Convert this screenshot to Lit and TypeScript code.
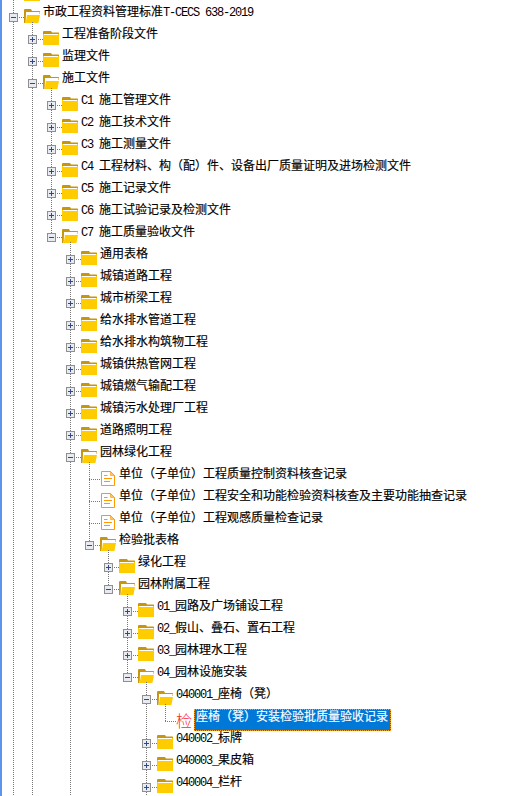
import { LitElement, html, css, svg } from "lit";
import { customElement } from "lit/decorators.js";

type Kind = "closed" | "open" | "doc" | "mark";
interface Row { d: number; k: Kind; t: string; sel?: boolean; }

const r = (d: number, k: Kind, t = ""): Row => ({ d, k, t });

const ROWS: Row[] = [
  r(0, "closed"),
  r(0, "open", "市政工程资料管理标准T-CECS 638-2019"),
  r(1, "closed", "工程准备阶段文件"),
  r(1, "closed", "监理文件"),
  r(1, "open", "施工文件"),
  r(2, "closed", "C1 施工管理文件"),
  r(2, "closed", "C2 施工技术文件"),
  r(2, "closed", "C3 施工测量文件"),
  r(2, "closed", "C4 工程材料、构（配）件、设备出厂质量证明及进场检测文件"),
  r(2, "closed", "C5 施工记录文件"),
  r(2, "closed", "C6 施工试验记录及检测文件"),
  r(2, "open", "C7 施工质量验收文件"),
  r(3, "closed", "通用表格"),
  r(3, "closed", "城镇道路工程"),
  r(3, "closed", "城市桥梁工程"),
  r(3, "closed", "给水排水管道工程"),
  r(3, "closed", "给水排水构筑物工程"),
  r(3, "closed", "城镇供热管网工程"),
  r(3, "closed", "城镇燃气输配工程"),
  r(3, "closed", "城镇污水处理厂工程"),
  r(3, "closed", "道路照明工程"),
  r(3, "open", "园林绿化工程"),
  r(4, "doc", "单位（子单位）工程质量控制资料核查记录"),
  r(4, "doc", "单位（子单位）工程安全和功能检验资料核查及主要功能抽查记录"),
  r(4, "doc", "单位（子单位）工程观感质量检查记录"),
  r(4, "open", "检验批表格"),
  r(5, "closed", "绿化工程"),
  r(5, "open", "园林附属工程"),
  r(6, "closed", "01_园路及广场铺设工程"),
  r(6, "closed", "02_假山、叠石、置石工程"),
  r(6, "closed", "03_园林理水工程"),
  r(6, "open", "04_园林设施安装"),
  r(7, "open", "040001_座椅（凳）"),
  { d: 8, k: "mark", t: "座椅（凳）安装检验批质量验收记录", sel: true },
  r(7, "closed", "040002_标牌"),
  r(7, "closed", "040003_果皮箱"),
  r(7, "closed", "040004_栏杆"),
  r(7, "closed"),
  r(3, "closed"),
  r(1, "closed"),
  r(0, "closed"),
];

function continues(i: number, level: number): boolean {
  for (let j = i + 1; j < ROWS.length; j++) {
    if (ROWS[j].d < level) return false;
    if (ROWS[j].d === level) return true;
  }
  return false;
}

const closedFolder = html`<svg class="icon" width="16" height="14" viewBox="0 0 16 14">
  <path d="M0 2V.5L1 0h7l1 1.5h6.5l.5.5v1H0z" fill="#c8960c"/>
  <rect x="0" y="3" width="16" height="11" fill="#ffcc00"/>
  <rect x="1" y="3" width="14" height="1" fill="#ffffff"/>
  <rect x="0" y="2" width="16" height="1" fill="#c8960c"/>
</svg>`;

const openFolder = html`<svg class="icon" width="16" height="14" viewBox="0 0 16 14">
  <path d="M0 14V.5L1 0h6l1 2h7.5l.5.5V5H2L1.6 14z" fill="#c8960c"/>
  <rect x="2" y="3" width="13.5" height="2" fill="#ffffff"/>
  <path d="M1.7 13.5L3 5h13l-1.7 8.5z" fill="#ffffff"/>
  <path d="M1.7 14L3 6h13l-1.6 8z" fill="#ffcc00"/>
</svg>`;

const docIcon = html`<svg class="icon" width="16" height="15" viewBox="0 0 16 15">
  <path d="M1.5 .5v14h13V4.5L10.5 .5z" fill="#ffffff" stroke="#ff9900"/>
  <path d="M10.5 .5v4h4z" fill="#ffc266" stroke="#ff9900" stroke-width=".6"/>
  <path d="M4 4.5h3.5M4 7.5h8M4 10.5h6" stroke="#ff9900" fill="none"/>
</svg>`;

const box = (open: boolean) => html`<svg class="box" width="9" height="9" viewBox="0 0 9 9">
  <rect x=".5" y=".5" width="8" height="8" fill="#e9ebf2" stroke="#8f8f8f"/>
  ${svg`<path d=${open ? "M2 4.5h5" : "M2 4.5h5M4.5 2v5"} stroke="#2f4a8a" fill="none"/>`}
</svg>`;

const runs = (t: string) =>
  t.split(/([\x00-\xff]+)/).map((s) => (/^[\x00-\xff]+$/.test(s) ? html`<span class="lat">${s}</span>` : s));

@customElement("app-root")
export class AppRoot extends LitElement {
  static styles = css`
    :host {
      display: block;
      height: 796px;
      overflow: hidden;
      background: #ffffff;
      border-left: 2px solid #5b94e8;
      box-sizing: border-box;
    }
    .tree {
      margin-top: -22px;
      padding-left: 2px;
      font: 12px/12px "Noto Sans CJK SC", sans-serif;
      color: #000000;
      -webkit-text-stroke: 0.15px currentColor;
    }
    .row {
      display: flex;
      align-items: flex-start;
      height: 22px;
      white-space: pre;
    }
    .guide {
      flex: none;
      width: 19px;
      height: 22px;
    }
    .guide.on {
      background: repeating-linear-gradient(to bottom, #777 0 1px, transparent 1px 2px) 9px 0 / 1px 100% no-repeat;
    }
    .tog {
      flex: none;
      width: 20px;
      height: 22px;
      background:
        repeating-linear-gradient(to bottom, #777 0 1px, transparent 1px 2px) 9px 0 / 1px 17px no-repeat,
        repeating-linear-gradient(to right, #777 0 1px, transparent 1px 2px) 9px 17px / 11px 1px no-repeat;
    }
    .tog.more {
      background:
        repeating-linear-gradient(to bottom, #777 0 1px, transparent 1px 2px) 9px 0 / 1px 100% no-repeat,
        repeating-linear-gradient(to right, #777 0 1px, transparent 1px 2px) 9px 17px / 11px 1px no-repeat;
    }
    .box {
      display: block;
      margin: 13px 0 0 5px;
    }
    .icon {
      flex: none;
      display: block;
      margin-top: 9px;
    }
    .mark {
      flex: none;
      width: 16px;
      margin-top: 8px;
      font-size: 16px;
      line-height: 16px;
      color: #f82828;
      -webkit-text-stroke: 0;
      font-weight: 300;
    }
    .label {
      margin: 5px 0 0 3px;
    }
    .label.sel {
      margin-left: 2px;
      box-sizing: border-box;
      width: 197px;
      height: 22px;
      padding: 0 1px;
      color: #ffffff;
      background: #0078d7;
      border: 1px dotted #ff9a20;
    }
    .lat {
      font-family: "Liberation Mono", monospace;
      font-size: 12px;
      letter-spacing: -1.2px;
      -webkit-text-stroke: 0;
    }
  `;

  private icon(row: Row) {
    if (row.k === "closed") return closedFolder;
    if (row.k === "open") return openFolder;
    if (row.k === "doc") return docIcon;
    return html`<span class="mark">检</span>`;
  }

  render() {
    return html`<div class="tree">
      ${ROWS.map((row, i) => {
        const guides = [];
        for (let l = 0; l < row.d; l++) {
          guides.push(html`<div class="guide ${continues(i, l) ? "on" : ""}"></div>`);
        }
        const hasBox = row.k === "open" || row.k === "closed";
        return html`<div class="row">
          ${guides}
          <div class="tog ${continues(i, row.d) ? "more" : ""}">${hasBox ? box(row.k === "open") : ""}</div>
          ${this.icon(row)}
          <div class="label ${row.sel ? "sel" : ""}">${runs(row.t)}</div>
        </div>`;
      })}
    </div>`;
  }
}
